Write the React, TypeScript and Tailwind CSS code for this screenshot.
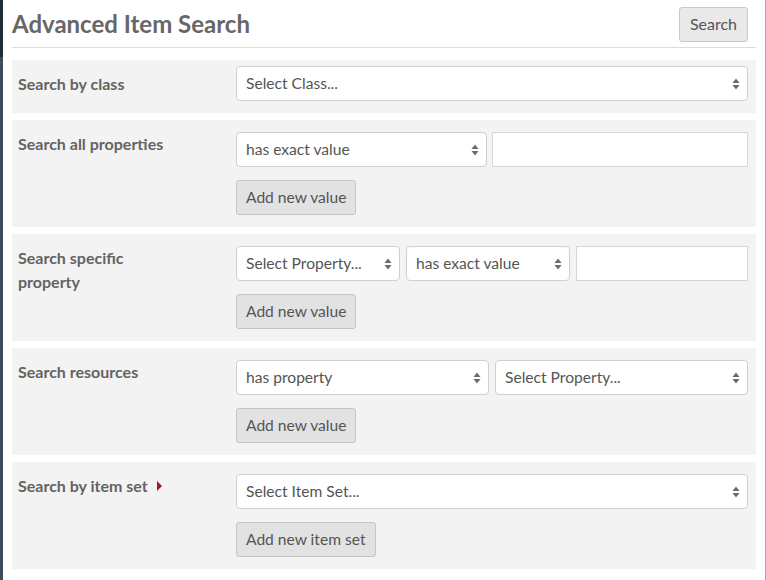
import type { ReactNode } from "react";

function Arrows() {
  return (
    <svg width="8" height="12" viewBox="0 0 8 12" className="shrink-0 text-[#6b6b6b]">
      <path d="M4 0.5L7.5 5H0.5Z" fill="currentColor" />
      <path d="M4 11.5L7.5 7H0.5Z" fill="currentColor" />
    </svg>
  );
}

function Select({ label, className = "" }: { label: string; className?: string }) {
  return (
    <div
      className={`flex h-[35px] items-center justify-between rounded-[4px] border border-[#cfcfcf] bg-white pl-[9px] pr-[7px] text-[15.6px] text-[#555] ${className}`}
    >
      <span>{label}</span>
      <Arrows />
    </div>
  );
}

function TextBox({ className = "" }: { className?: string }) {
  return <div className={`h-[35px] border border-[#d6d6d6] bg-white ${className}`} />;
}

function AddButton({ label }: { label: string }) {
  return (
    <button className="mt-[13px] h-[35px] self-start rounded-[3px] border border-[#c4c4c4] bg-[#e2e2e2] px-[9px] text-[15.6px] text-[#555]">
      {label}
    </button>
  );
}

function Section({
  label,
  children,
  first = false,
  marker = false,
}: {
  label: string;
  children: ReactNode;
  first?: boolean;
  marker?: boolean;
}) {
  return (
    <div className={`flex bg-[#f3f3f3] pr-[8px] pb-[12px] ${first ? "pt-[6px]" : "mt-[7px] pt-[12px]"}`}>
      <div
        className={`flex w-[224px] shrink-0 items-start pl-[6px] text-[16px] font-bold leading-[24px] text-[#636363] ${
          first ? "-mt-[6px] pt-[12px]" : ""
        }`}
      >
        <span className="max-w-[160px]">{label}</span>
        {marker && (
          <svg width="6" height="10" viewBox="0 0 6 10" className="mt-[7px] ml-[9px] shrink-0">
            <path d="M0 0L5 5L0 10Z" fill="#a51c1c" />
          </svg>
        )}
      </div>
      <div className="flex flex-1 flex-col">{children}</div>
    </div>
  );
}

export default function App() {
  return (
    <div className="flex h-[580px] w-[766px] bg-white font-['Lato','Liberation_Sans',sans-serif]">
      <div className="flex w-[3px] shrink-0 flex-col">
        <div className="h-[57px] bg-[#1f2b37]" />
        <div className="flex-1 bg-[#3d4c5d]" />
      </div>
      <div className="flex flex-1 flex-col border-r border-[#a9a9a9] pl-[9px] pr-[9px]">
        <header className="flex h-[48px] items-center justify-between border-b border-[#dddddd] pr-[8px]">
          <h1 className="text-[24px] font-bold text-[#676767]">Advanced Item Search</h1>
          <button className="mt-[1px] h-[35px] rounded-[3px] border border-[#c9c9c9] bg-[#e9e9e9] px-[10px] text-[16px] text-[#555]">
            Search
          </button>
        </header>

        <div className="mt-[12px] flex flex-col">
          <Section label="Search by class" first>
            <Select label="Select Class..." />
          </Section>

          <Section label="Search all properties">
            <div className="flex gap-[5px]">
              <Select label="has exact value" className="w-[251px]" />
              <TextBox className="flex-1" />
            </div>
            <AddButton label="Add new value" />
          </Section>

          <Section label="Search specific property">
            <div className="flex gap-[6px]">
              <Select label="Select Property..." className="w-[164px]" />
              <Select label="has exact value" className="w-[164px]" />
              <TextBox className="flex-1" />
            </div>
            <AddButton label="Add new value" />
          </Section>

          <Section label="Search resources">
            <div className="flex gap-[6px]">
              <Select label="has property" className="flex-1" />
              <Select label="Select Property..." className="flex-1" />
            </div>
            <AddButton label="Add new value" />
          </Section>

          <Section label="Search by item set" marker>
            <Select label="Select Item Set..." />
            <AddButton label="Add new item set" />
          </Section>
        </div>
      </div>
    </div>
  );
}
